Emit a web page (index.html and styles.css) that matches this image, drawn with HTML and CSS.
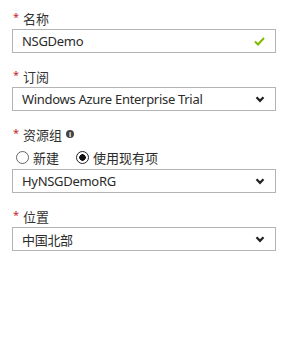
FILE: index.html
```html
<!DOCTYPE html>
<html lang="zh-CN">
<head>
    <meta charset="UTF-8">
    <meta name="viewport" content="width=device-width, initial-scale=1.0">
    <title>创建网络安全组</title>
    <link rel="stylesheet" href="styles.css">
</head>
<body>
    <form class="blade-form">
        <div class="field">
            <label class="field-label"><span class="required">*</span>名称</label>
            <div class="text-box">
                <span class="value">NSGDemo</span>
                <svg class="check" width="11" height="9" viewBox="0 0 11 9">
                    <path d="M1 4.5 L4 7.5 L10 1" fill="none" stroke="#7fba00" stroke-width="2"/>
                </svg>
            </div>
        </div>

        <div class="field">
            <label class="field-label"><span class="required">*</span>订阅</label>
            <div class="drop-box">
                <span class="value">Windows Azure Enterprise Trial</span>
                <svg class="chevron" width="10" height="7" viewBox="0 0 10 7">
                    <path d="M1.5 1.2 L5 4.8 L8.5 1.2" fill="none" stroke="#222" stroke-width="2.2"/>
                </svg>
            </div>
        </div>

        <div class="field">
            <label class="field-label">
                <span class="required">*</span>资源组
                <span class="info">i</span>
            </label>
            <div class="radio-row">
                <span class="radio"><span class="dot"></span>新建</span>
                <span class="radio checked"><span class="dot"></span>使用现有项</span>
            </div>
            <div class="drop-box">
                <span class="value">HyNSGDemoRG</span>
                <svg class="chevron" width="10" height="7" viewBox="0 0 10 7">
                    <path d="M1.5 1.2 L5 4.8 L8.5 1.2" fill="none" stroke="#222" stroke-width="2.2"/>
                </svg>
            </div>
        </div>

        <div class="field">
            <label class="field-label"><span class="required">*</span>位置</label>
            <div class="drop-box">
                <span class="value">中国北部</span>
                <svg class="chevron" width="10" height="7" viewBox="0 0 10 7">
                    <path d="M1.5 1.2 L5 4.8 L8.5 1.2" fill="none" stroke="#222" stroke-width="2.2"/>
                </svg>
            </div>
        </div>
    </form>
</body>
</html>
```

FILE: styles.css
```css
body {
    margin: 0;
    background: #fff;
    color: #2b2b2b;
    font-family: "Noto Sans", "Noto Sans CJK SC", sans-serif;
    font-size: 13px;
}
.blade-form {
    padding: 7px 19px 0 12px;
}
.field {
    margin-bottom: 12px;
}
.field-label {
    display: flex;
    align-items: center;
    height: 22px;
    padding-left: 1px;
    color: #333;
}
.required {
    align-self: flex-start;
    margin-top: 4px;
    width: 10px;
    color: #c4262e;
    font-size: 11px;
    line-height: 1;
}
.info {
    display: inline-flex;
    justify-content: center;
    align-items: center;
    width: 8px;
    height: 8px;
    margin-left: 4px;
    border-radius: 50%;
    background: #444;
    color: #fff;
    font-size: 7px;
    font-weight: bold;
    line-height: 1;
}
.text-box, .drop-box {
    display: flex;
    align-items: center;
    justify-content: space-between;
    height: 24px;
    box-sizing: border-box;
    border: 1px solid #b4b4b4;
    padding: 0 10px 0 9px;
}
.value {
    white-space: nowrap;
    letter-spacing: -0.3px;
}
.radio-row {
    display: flex;
    align-items: center;
    height: 24px;
    padding-left: 4px;
    gap: 17px;
}
.radio {
    display: flex;
    align-items: center;
    gap: 4px;
}
.radio .dot {
    width: 13px;
    height: 13px;
    box-sizing: border-box;
    border: 1px solid #666;
    border-radius: 50%;
    background: #fff;
}
.radio.checked .dot {
    border-color: #222;
    background: radial-gradient(circle, #111 0 3px, #fff 3.5px);
}
```
